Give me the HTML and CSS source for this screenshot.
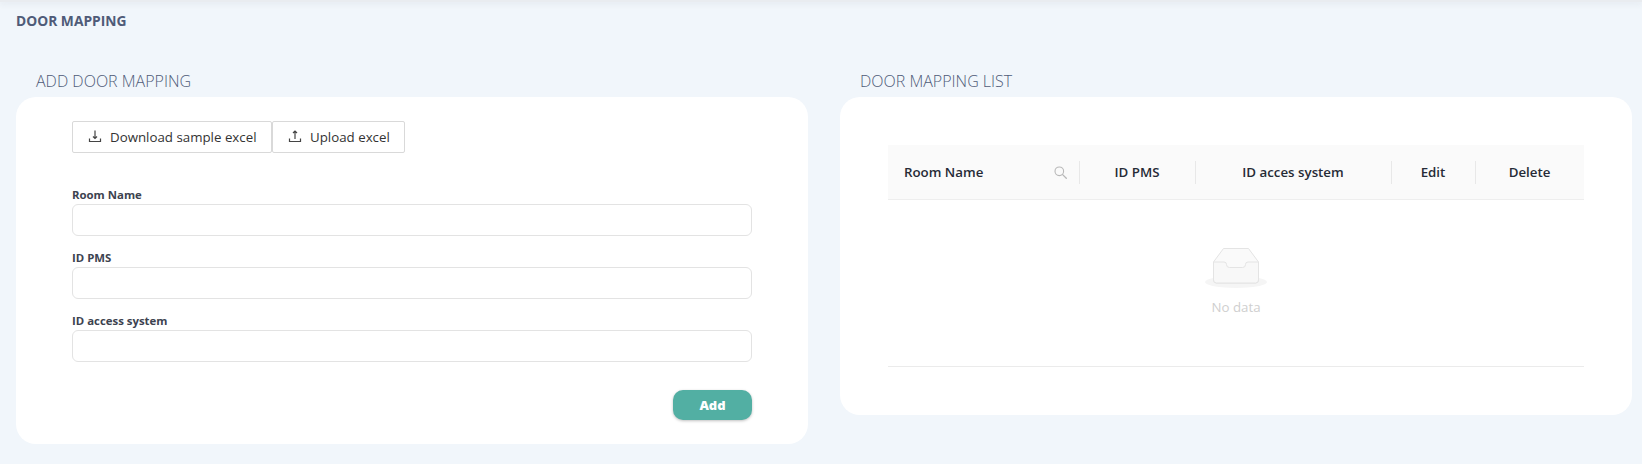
FILE: index.html
```html
<!DOCTYPE html>
<html lang="en">
<head>
<meta charset="utf-8">
<title>Door Mapping</title>
<link rel="stylesheet" href="styles.css">
</head>
<body>
<div class="topbar"></div>
<main class="page">
  <h1 class="page-title">DOOR MAPPING</h1>
  <div class="columns">
    <section class="column">
      <h2 class="section-title">ADD DOOR MAPPING</h2>
      <div class="card card-form">
        <div class="btn-row">
          <button class="btn btn-download" type="button">
            <svg class="btn-icon" viewBox="0 0 14 14" aria-hidden="true"><path d="M7 .5V8.500M5 6.500L7 8.500L9 6.500" fill="none" stroke="#444" stroke-width="1.200"/><path d="M1.500 8.500V11.500H12.500V8.500" fill="none" stroke="#444" stroke-width="1.200"/></svg>
            Download sample excel
          </button>
          <button class="btn btn-upload" type="button">
            <svg class="btn-icon" viewBox="0 0 14 14" aria-hidden="true"><path d="M7 9V1M5 3L7 1L9 3" fill="none" stroke="#444" stroke-width="1.200"/><path d="M1.500 8.500V11.500H12.500V8.500" fill="none" stroke="#444" stroke-width="1.200"/></svg>
            Upload excel
          </button>
        </div>
        <form class="form">
          <div class="field"><label class="field-label">Room Name</label><input class="field-input" type="text"></div>
          <div class="field"><label class="field-label">ID PMS</label><input class="field-input" type="text"></div>
          <div class="field"><label class="field-label">ID access system</label><input class="field-input" type="text"></div>
          <div class="form-actions"><button class="btn-add" type="button">Add</button></div>
        </form>
      </div>
    </section>
    <section class="column">
      <h2 class="section-title">DOOR MAPPING LIST</h2>
      <div class="card card-list">
        <div class="table">
          <div class="thead">
            <div class="th th-room">
              <span>Room Name</span>
              <svg class="search-icon" viewBox="0 0 13 13" aria-hidden="true"><circle cx="5.300" cy="5.300" r="4.300" fill="none" stroke="#b8b8b8" stroke-width="1.100"/><path d="M8.400 8.400L12.700 12.700" stroke="#b8b8b8" stroke-width="1.300"/></svg>
            </div>
            <div class="th th-pms">ID PMS</div>
            <div class="th th-access">ID acces system</div>
            <div class="th th-edit">Edit</div>
            <div class="th th-delete">Delete</div>
          </div>
          <div class="empty">
            <svg class="empty-icon" viewBox="0 0 62 40" aria-hidden="true">
              <ellipse cx="31" cy="34" rx="31" ry="6" fill="#f5f5f5"/>
              <path d="M8.500 14L18.500 .5H43.500L53.500 14V32Q53.500 35 50.500 35H11.500Q8.500 35 8.500 32Z" fill="#fafafa" stroke="#e4e4e4"/>
              <path d="M8.500 14H19Q21.500 14 21.500 16.500Q21.500 19.500 24.500 19.500H37.500Q40.500 19.500 40.500 16.500Q40.500 14 43 14H53.500V32Q53.500 35 50.500 35H11.500Q8.500 35 8.500 32Z" fill="#f8f8f8" stroke="#e4e4e4"/>
            </svg>
            <div class="empty-text">No data</div>
          </div>
        </div>
      </div>
    </section>
  </div>
</main>
</body>
</html>
```
FILE: styles.css
```css
* { box-sizing: border-box; }
html, body { margin: 0; padding: 0; }
body {
  width: 1642px;
  height: 464px;
  overflow: hidden;
  background: #f1f6fb;
  font-family: "Open Sans", "Noto Sans", sans-serif;
  color: #262626;
}
.topbar {
  height: 2px;
  background: #e9ecf0;
  box-shadow: 0 1px 6px rgba(60, 70, 90, 0.16);
}
.page { padding: 0 10px 0 16px; }
.page-title {
  margin: 0;
  padding-top: 10px;
  height: 60px;
  font-size: 13.800px;
  line-height: 18px;
  font-weight: 700;
  color: #4f5b78;
}
.columns { display: flex; gap: 32px; align-items: flex-start; }
.column { width: 792px; }
.section-title {
  margin: 0;
  padding-left: 20px;
  height: 35px;
  padding-top: 9px;
  font-size: 16px;
  line-height: 20px;
  font-weight: 300;
  color: #4f5b78;
}
.card { background: #fff; border-radius: 20px; }
.card-form { height: 347px; padding: 24px 56px; }
.card-list { height: 318px; padding: 48px; }
.btn-row { display: flex; }
.btn {
  display: flex;
  align-items: center;
  height: 32px;
  padding: 0 15px;
  gap: 8px;
  border: 1px solid #d9d9d9;
  border-radius: 2px;
  background: #fff;
  font: 400 13.300px/20px "Open Sans", "Noto Sans", sans-serif;
  color: #333;
  white-space: nowrap;
}
.btn-download { width: 200px; }
.btn-upload { width: 133px; }
.btn-icon { width: 14px; height: 14px; flex: none; }
.form { margin-top: 32px; }
.field { height: 63px; }
.field-label {
  display: block;
  height: 19px;
  padding-top: 1px;
  font-size: 11.400px;
  line-height: 18px;
  font-weight: 700;
  color: #3d4350;
}
.field-input {
  display: block;
  width: 100%;
  height: 32px;
  border: 1px solid #e3e3e3;
  border-radius: 6px;
  background: #fff;
  outline: none;
}
.form-actions { display: flex; justify-content: flex-end; padding-top: 16px; }
.btn-add {
  width: 79px;
  height: 30px;
  border: 0;
  border-radius: 10px;
  background: #52afa3;
  box-shadow: 0 1px 3px rgba(0, 0, 0, 0.25);
  color: #fff;
  font: 800 13px/20px "Open Sans", "Noto Sans", sans-serif;
}
.table { border-bottom: 1px solid #ebebeb; height: 222px; }
.thead {
  display: flex;
  height: 55px;
  background: #fafafa;
  border-bottom: 1px solid #eeeeee;
}
.th {
  position: relative;
  display: flex;
  align-items: center;
  justify-content: center;
  font-size: 13.300px;
  font-weight: 600;
  color: #262b36;
}
.th + .th::before {
  content: "";
  position: absolute;
  left: 0;
  top: 16px;
  height: 23px;
  width: 1px;
  background: #e8e8e8;
}
.th-room { width: 191px; justify-content: space-between; padding: 0 12px 0 16px; }
.th-pms { width: 116px; }
.th-access { width: 196px; }
.th-edit { width: 84px; }
.th-delete { width: 109px; }
.search-icon { width: 13px; height: 13px; }
.empty {
  display: flex;
  flex-direction: column;
  align-items: center;
  padding-top: 48px;
}
.empty-icon { width: 62px; height: 40px; display: block; }
.empty-text {
  margin-top: 9px;
  font-size: 13.300px;
  line-height: 20px;
  color: #cfcfcf;
}
```
